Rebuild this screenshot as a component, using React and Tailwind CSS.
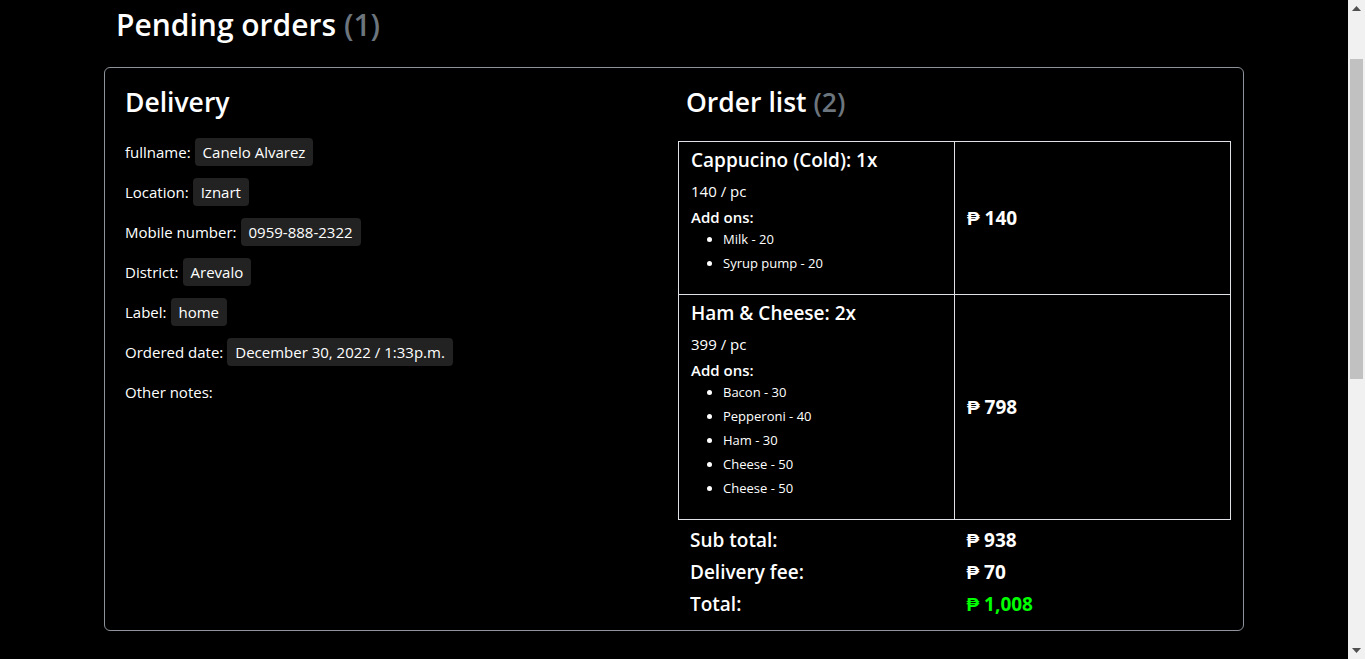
const delivery = [
  { label: 'fullname:', value: 'Canelo Alvarez' },
  { label: 'Location:', value: 'Iznart' },
  { label: 'Mobile number:', value: '0959-888-2322' },
  { label: 'District:', value: 'Arevalo' },
  { label: 'Label:', value: 'home' },
  { label: 'Ordered date:', value: 'December 30, 2022 / 1:33p.m.' },
  { label: 'Other notes:', value: null },
]

const orders = [
  {
    name: 'Cappucino (Cold): 1x',
    price: '140 / pc',
    addOns: ['Milk - 20', 'Syrup pump - 20'],
    total: '₱ 140',
  },
  {
    name: 'Ham & Cheese: 2x',
    price: '399 / pc',
    addOns: ['Bacon - 30', 'Pepperoni - 40', 'Ham - 30', 'Cheese - 50', 'Cheese - 50'],
    total: '₱ 798',
  },
]

// Window scrollbar strip on the right
const Scrollbar = () => (
  <div className="w-[17px] h-full bg-[#f1f1f1] flex flex-col items-center">
    <div className="h-[17px] flex items-center justify-center">
      <svg width="9" height="5" viewBox="0 0 9 5"><polygon points="4.5,0 9,5 0,5" fill="#505050" /></svg>
    </div>
    <div className="w-[13px] h-[320px] mt-[42px] bg-[#c1c1c1]" />
    <div className="flex-1" />
    <div className="h-[17px] flex items-center justify-center">
      <svg width="9" height="5" viewBox="0 0 9 5"><polygon points="0,0 9,0 4.5,5" fill="#505050" /></svg>
    </div>
  </div>
)

const App = () => {
  return (
    <div
      className="h-[659px] flex bg-black text-white overflow-hidden"
      style={{ fontFamily: '"Segoe UI", "Open Sans", sans-serif' }}
    >
      <div className="flex-1">
        <div className="w-[1140px] mx-auto">
          {/* Header */}
          <h2 className="px-3 pt-[7px] mb-[24px] text-[30px] leading-[36px] font-semibold">
            Pending orders <span className="text-[#6c757d]">(1)</span>
          </h2>

          {/* Card */}
          <div className="border border-[#8c939b] rounded-[6px] flex pt-[18px] pb-[10px]">
            {/* Delivery */}
            <div className="w-[573px] pl-[20px]">
              <h3 className="text-[26.5px] leading-[32px] font-semibold mb-[20px]">Delivery</h3>
              <div className="flex flex-col gap-[12px]">
                {delivery.map((d) => (
                  <div key={d.label} className="flex items-center gap-[4px] h-[28px] text-[15px]">
                    <span>{d.label}</span>
                    {d.value && (
                      <span className="bg-[#222222] rounded-[4px] px-[8px] h-[28px] flex items-center">
                        {d.value}
                      </span>
                    )}
                  </div>
                ))}
              </div>
            </div>

            {/* Order list */}
            <div className="w-[553px]">
              <h3 className="pl-[8px] text-[26.5px] leading-[32px] font-semibold mb-[23px]">
                Order list <span className="text-[#6c757d]">(2)</span>
              </h3>
              <table className="w-full border-collapse">
                <tbody>
                  {orders.map((o) => (
                    <tr key={o.name}>
                      <td className="w-1/2 border border-[#dee2e6] px-[12px] pt-[6px] pb-[4px] align-top">
                        <h5 className="text-[19px] leading-[24px] font-semibold mb-[8px]">{o.name}</h5>
                        <p className="text-[15px] leading-[22px] mb-[5px]">{o.price}</p>
                        <p className="text-[15px] leading-[20px] font-semibold">Add ons:</p>
                        <ul className="list-disc pl-[32px] mb-[15px] text-[13px]">
                          {o.addOns.map((a, i) => (
                            <li key={i} className="leading-[24px]">{a}</li>
                          ))}
                        </ul>
                      </td>
                      <td className="w-1/2 border border-[#dee2e6] px-[12px] align-middle text-[19px] font-bold">
                        {o.total}
                      </td>
                    </tr>
                  ))}
                </tbody>
              </table>
              <div className="grid grid-cols-2 text-[19px] font-semibold leading-[32px] mt-[4px]">
                <span className="pl-[12px]">Sub total:</span>
                <span className="pl-[12px] font-bold">₱ 938</span>
                <span className="pl-[12px]">Delivery fee:</span>
                <span className="pl-[12px] font-bold">₱ 70</span>
                <span className="pl-[12px]">Total:</span>
                <span className="pl-[12px] font-bold text-[#00ff00]">₱ 1,008</span>
              </div>
            </div>
          </div>
        </div>
      </div>
      <Scrollbar />
    </div>
  )
}

export default App
